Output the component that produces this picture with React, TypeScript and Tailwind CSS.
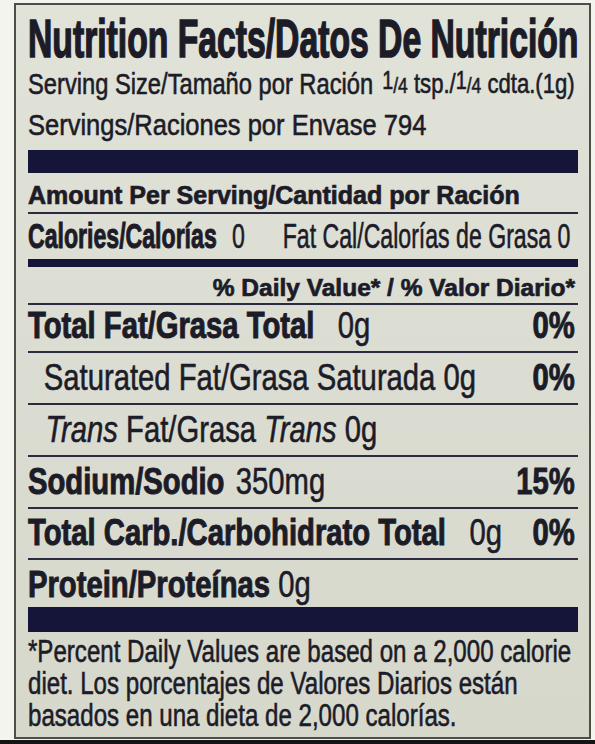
import React from 'react'

// heavier strokes to get closer to the printed condensed face
const bold = 'font-bold [-webkit-text-stroke:1px_currentColor]'

// thin separator between nutrient rows
const Rule = () => <div className="h-[2px] bg-[#2a2a40]" />

// printed "1/4" with the raised numerator
const Quarter = () => (
  <span className="text-[22px]">
    <span className="relative -top-[4px] text-[25px]">1</span>/4
  </span>
)

export default function App() {
  return (
    <div className="flex h-[744px] w-[595px] flex-col overflow-hidden bg-[#f3f4ee] font-['Liberation_Sans',Arial,sans-serif] text-[#1c1c28]">
      <div className="ml-[14px] mt-[3px] h-[736px] w-[577px] overflow-hidden border-2 border-[#4e4e48] bg-linear-to-b from-[#e1e2d8] to-[#d7d8cc] pl-[12px] pr-[11px] whitespace-nowrap [-webkit-text-stroke:0.6px_currentColor]">
        {/* header */}
        <div className="h-[67px] text-[54px] font-bold leading-[67px] [-webkit-text-stroke:1.6px_currentColor]">
          <div className="w-[882px] origin-left scale-x-[0.624]">Nutrition Facts/Datos De Nutrición</div>
        </div>
        <div className="h-[23px] text-[30px] leading-[23px]">
          <div className="flex w-[696px] origin-left scale-x-[0.79]">
            <span>Serving Size/Tamaño por Ración</span>
            <span className="ml-auto mr-[4px] text-[28px]">
              <Quarter /> tsp./<Quarter /> cdta.(1g)
            </span>
          </div>
        </div>
        <div className="h-[55px] text-[30px] leading-[59px]">
          <div className="w-[647px] origin-left scale-x-[0.85]">Servings/Raciones por Envase 794</div>
        </div>
        <div className="h-[23px] bg-[#15153a]" />

        <div className="h-[39px] text-[25px] font-bold leading-[45px] [-webkit-text-stroke:0.7px_currentColor]">
          Amount Per Serving/Cantidad por Ración
        </div>
        <Rule />
        <div className="h-[45px] text-[35px] leading-[44px]">
          <div className="flex w-[833px] origin-left scale-x-[0.66]">
            <span className={`w-[309px] ${bold}`}>Calories/Calorías</span>
            <span className="w-[77px]">0</span>
            <span>Fat Cal/Calorías de Grasa 0</span>
          </div>
        </div>
        <div className="h-[8px] bg-[#15153a]" />
        <div className="h-[36px] pr-[3px] text-right text-[24.5px] font-bold leading-[41px] [-webkit-text-stroke:0.7px_currentColor]">
          % Daily Value* / % Valor Diario*
        </div>
        <Rule />

        {/* nutrients */}
        <div className="h-[46px] text-[37px] leading-[42px]">
          <div className="flex w-[696px] origin-left scale-x-[0.79]">
            <span className={`w-[392px] ${bold}`}>Total Fat/Grasa Total</span>
            <span>0g</span>
            <span className={`ml-auto mr-[4px] ${bold}`}>0%</span>
          </div>
        </div>
        <Rule />
        <div className="h-[50px] text-[37px] leading-[50px]">
          <div className="flex w-[696px] origin-left scale-x-[0.79] pl-[20px]">
            <span>Saturated Fat/Grasa Saturada 0g</span>
            <span className={`ml-auto mr-[4px] ${bold}`}>0%</span>
          </div>
        </div>
        <Rule />
        <div className="h-[50px] text-[37px] leading-[50px]">
          <div className="w-[696px] origin-left scale-x-[0.79] pl-[22px]">
            <span className="italic">Trans</span> Fat/Grasa <span className="italic">Trans</span> 0g
          </div>
        </div>
        <Rule />
        <div className="h-[50px] text-[37px] leading-[50px]">
          <div className="flex w-[696px] origin-left scale-x-[0.79]">
            <span className={`w-[263px] ${bold}`}>Sodium/Sodio</span>
            <span>350mg</span>
            <span className={`ml-auto mr-[4px] ${bold}`}>15%</span>
          </div>
        </div>
        <Rule />
        <div className="h-[49px] text-[37px] leading-[48px]">
          <div className="flex w-[696px] origin-left scale-x-[0.79]">
            <span className={`w-[559px] ${bold}`}>Total Carb./Carbohidrato Total</span>
            <span>0g</span>
            <span className={`ml-auto mr-[4px] ${bold}`}>0%</span>
          </div>
        </div>
        <Rule />
        <div className="h-[47px] text-[37px] leading-[50px]">
          <div className="w-[696px] origin-left scale-x-[0.79]">
            <span className={bold}>Protein/Proteínas</span> 0g
          </div>
        </div>
        <div className="h-[25px] bg-[#15153a]" />

        {/* footnote */}
        <div className="pt-[4px] text-[31px] leading-[32px]">
          <div className="w-[708px] origin-left scale-x-[0.777]">
            <div>*Percent Daily Values are based on a 2,000 calorie</div>
            <div>diet. Los porcentajes de Valores Diarios están</div>
            <div>basados en una dieta de 2,000 calorías.</div>
          </div>
        </div>
      </div>
      <div className="mt-auto h-[4px] bg-[#141414]" />
    </div>
  )
}
